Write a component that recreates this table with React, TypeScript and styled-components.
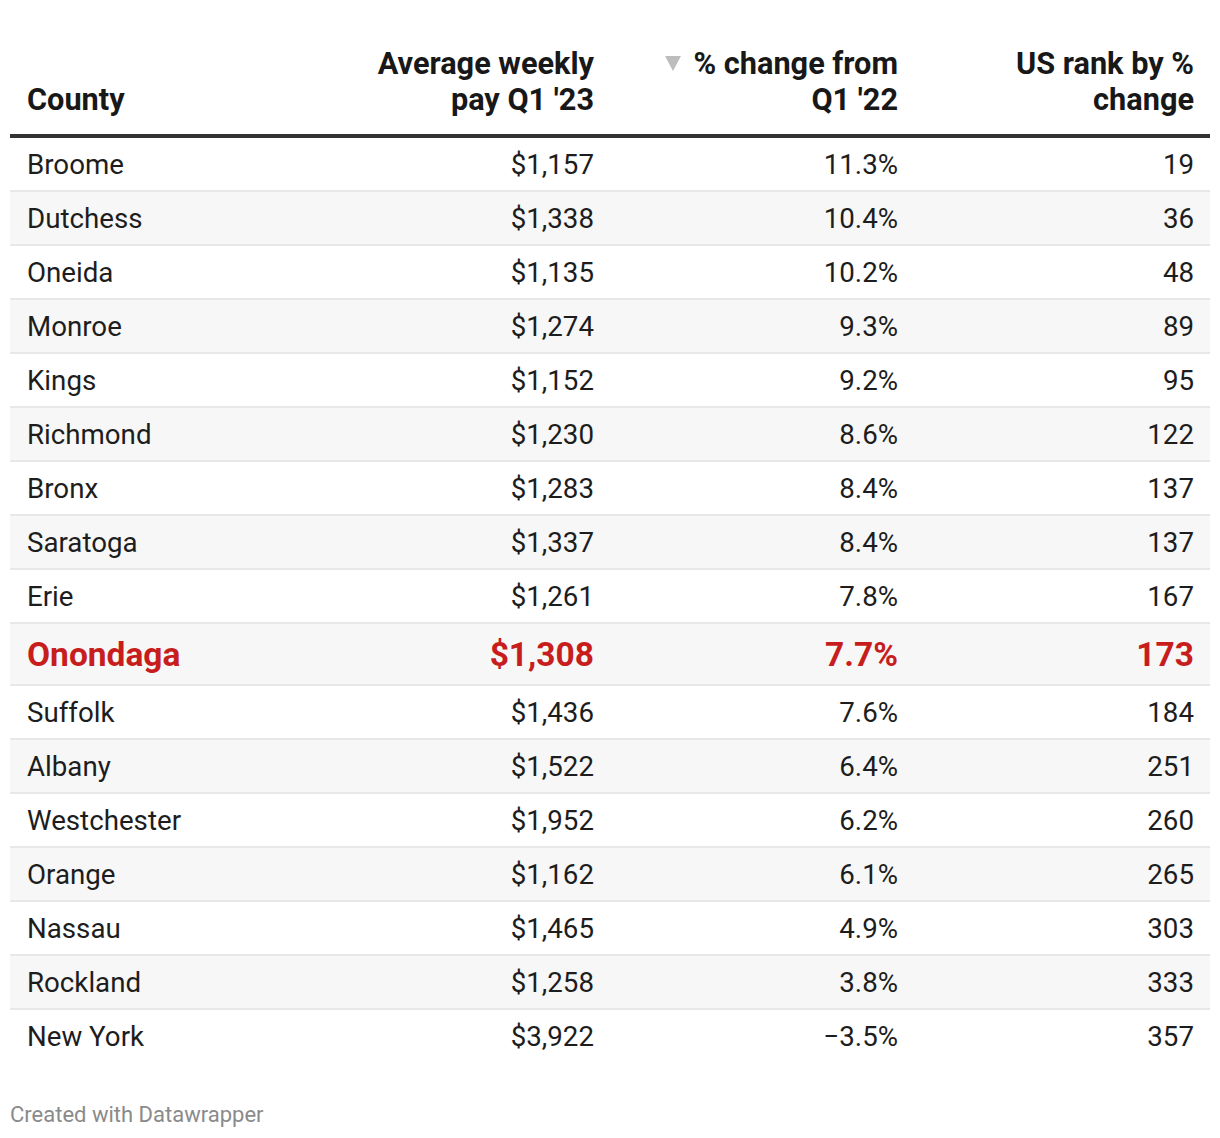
import React from 'react';
import styled, { createGlobalStyle } from 'styled-components';

const GlobalStyle = createGlobalStyle`
  body {
    margin: 0;
    background: #ffffff;
    font-family: Roboto, "Liberation Sans", sans-serif;
    color: #1d1d1d;
  }
`;

type Row = { county: string; pay: string; change: string; rank: string; highlight?: boolean };

const rows: Row[] = [
  { county: 'Broome', pay: '$1,157', change: '11.3%', rank: '19' },
  { county: 'Dutchess', pay: '$1,338', change: '10.4%', rank: '36' },
  { county: 'Oneida', pay: '$1,135', change: '10.2%', rank: '48' },
  { county: 'Monroe', pay: '$1,274', change: '9.3%', rank: '89' },
  { county: 'Kings', pay: '$1,152', change: '9.2%', rank: '95' },
  { county: 'Richmond', pay: '$1,230', change: '8.6%', rank: '122' },
  { county: 'Bronx', pay: '$1,283', change: '8.4%', rank: '137' },
  { county: 'Saratoga', pay: '$1,337', change: '8.4%', rank: '137' },
  { county: 'Erie', pay: '$1,261', change: '7.8%', rank: '167' },
  { county: 'Onondaga', pay: '$1,308', change: '7.7%', rank: '173', highlight: true },
  { county: 'Suffolk', pay: '$1,436', change: '7.6%', rank: '184' },
  { county: 'Albany', pay: '$1,522', change: '6.4%', rank: '251' },
  { county: 'Westchester', pay: '$1,952', change: '6.2%', rank: '260' },
  { county: 'Orange', pay: '$1,162', change: '6.1%', rank: '265' },
  { county: 'Nassau', pay: '$1,465', change: '4.9%', rank: '303' },
  { county: 'Rockland', pay: '$1,258', change: '3.8%', rank: '333' },
  { county: 'New York', pay: '$3,922', change: '\u22123.5%', rank: '357' },
];

const Wrapper = styled.div`
  padding: 31px 10px 0 10px;
  width: 1200px;
`;

const Table = styled.div`
  display: flex;
  flex-direction: column;
`;

const columns = '300px 300px 304px 296px';

const HeadRow = styled.div`
  display: grid;
  grid-template-columns: ${columns};
  align-items: end;
  padding: 15px 0 16px;
  border-bottom: 4px solid #333333;
`;

const HeadCell = styled.div<{ $right?: boolean }>`
  padding: 0 16px 0 17px;
  font-size: 30.7px;
  line-height: 36px;
  font-weight: 700;
  color: #181818;
  text-align: ${(p) => (p.$right ? 'right' : 'left')};
`;

const SortMark = styled.span`
  display: inline-block;
  width: 0;
  height: 0;
  border-left: 8px solid transparent;
  border-right: 8px solid transparent;
  border-top: 15px solid #bdbdbd;
  margin-right: 12px;
  vertical-align: 3px;
`;

const BodyRow = styled.div<{ $shade: boolean; $highlight?: boolean; $last?: boolean }>`
  display: grid;
  grid-template-columns: ${columns};
  align-items: center;
  height: ${(p) => (p.$highlight ? '60px' : '52px')};
  background: ${(p) => (p.$shade ? '#f7f7f7' : '#ffffff')};
  border-bottom: ${(p) => (p.$last ? 'none' : '2px solid #e8e8e8')};
  color: ${(p) => (p.$highlight ? '#c71e1d' : '#1d1d1d')};
  font-size: ${(p) => (p.$highlight ? '33.5px' : '27.7px')};
  font-weight: ${(p) => (p.$highlight ? 700 : 400)};
`;

const Cell = styled.div<{ $right?: boolean }>`
  padding: 0 16px 0 17px;
  text-align: ${(p) => (p.$right ? 'right' : 'left')};
  white-space: nowrap;
`;

const Footer = styled.div`
  margin-top: 41px;
  font-size: 22px;
  line-height: 24px;
  color: #8a8a8a;
`;

export default function App() {
  return (
    <>
      <GlobalStyle />
      <Wrapper>
        <Table>
          <HeadRow>
            <HeadCell>County</HeadCell>
            <HeadCell $right>
              Average weekly
              <br />
              pay Q1 '23
            </HeadCell>
            <HeadCell $right>
              <SortMark />% change from
              <br />
              Q1 '22
            </HeadCell>
            <HeadCell $right>
              US rank by %
              <br />
              change
            </HeadCell>
          </HeadRow>
          {rows.map((r, i) => (
            <BodyRow
              key={r.county}
              $shade={i % 2 === 1}
              $highlight={r.highlight}
              $last={i === rows.length - 1}
            >
              <Cell>{r.county}</Cell>
              <Cell $right>{r.pay}</Cell>
              <Cell $right>{r.change}</Cell>
              <Cell $right>{r.rank}</Cell>
            </BodyRow>
          ))}
        </Table>
        <Footer>Created with Datawrapper</Footer>
      </Wrapper>
    </>
  );
}
